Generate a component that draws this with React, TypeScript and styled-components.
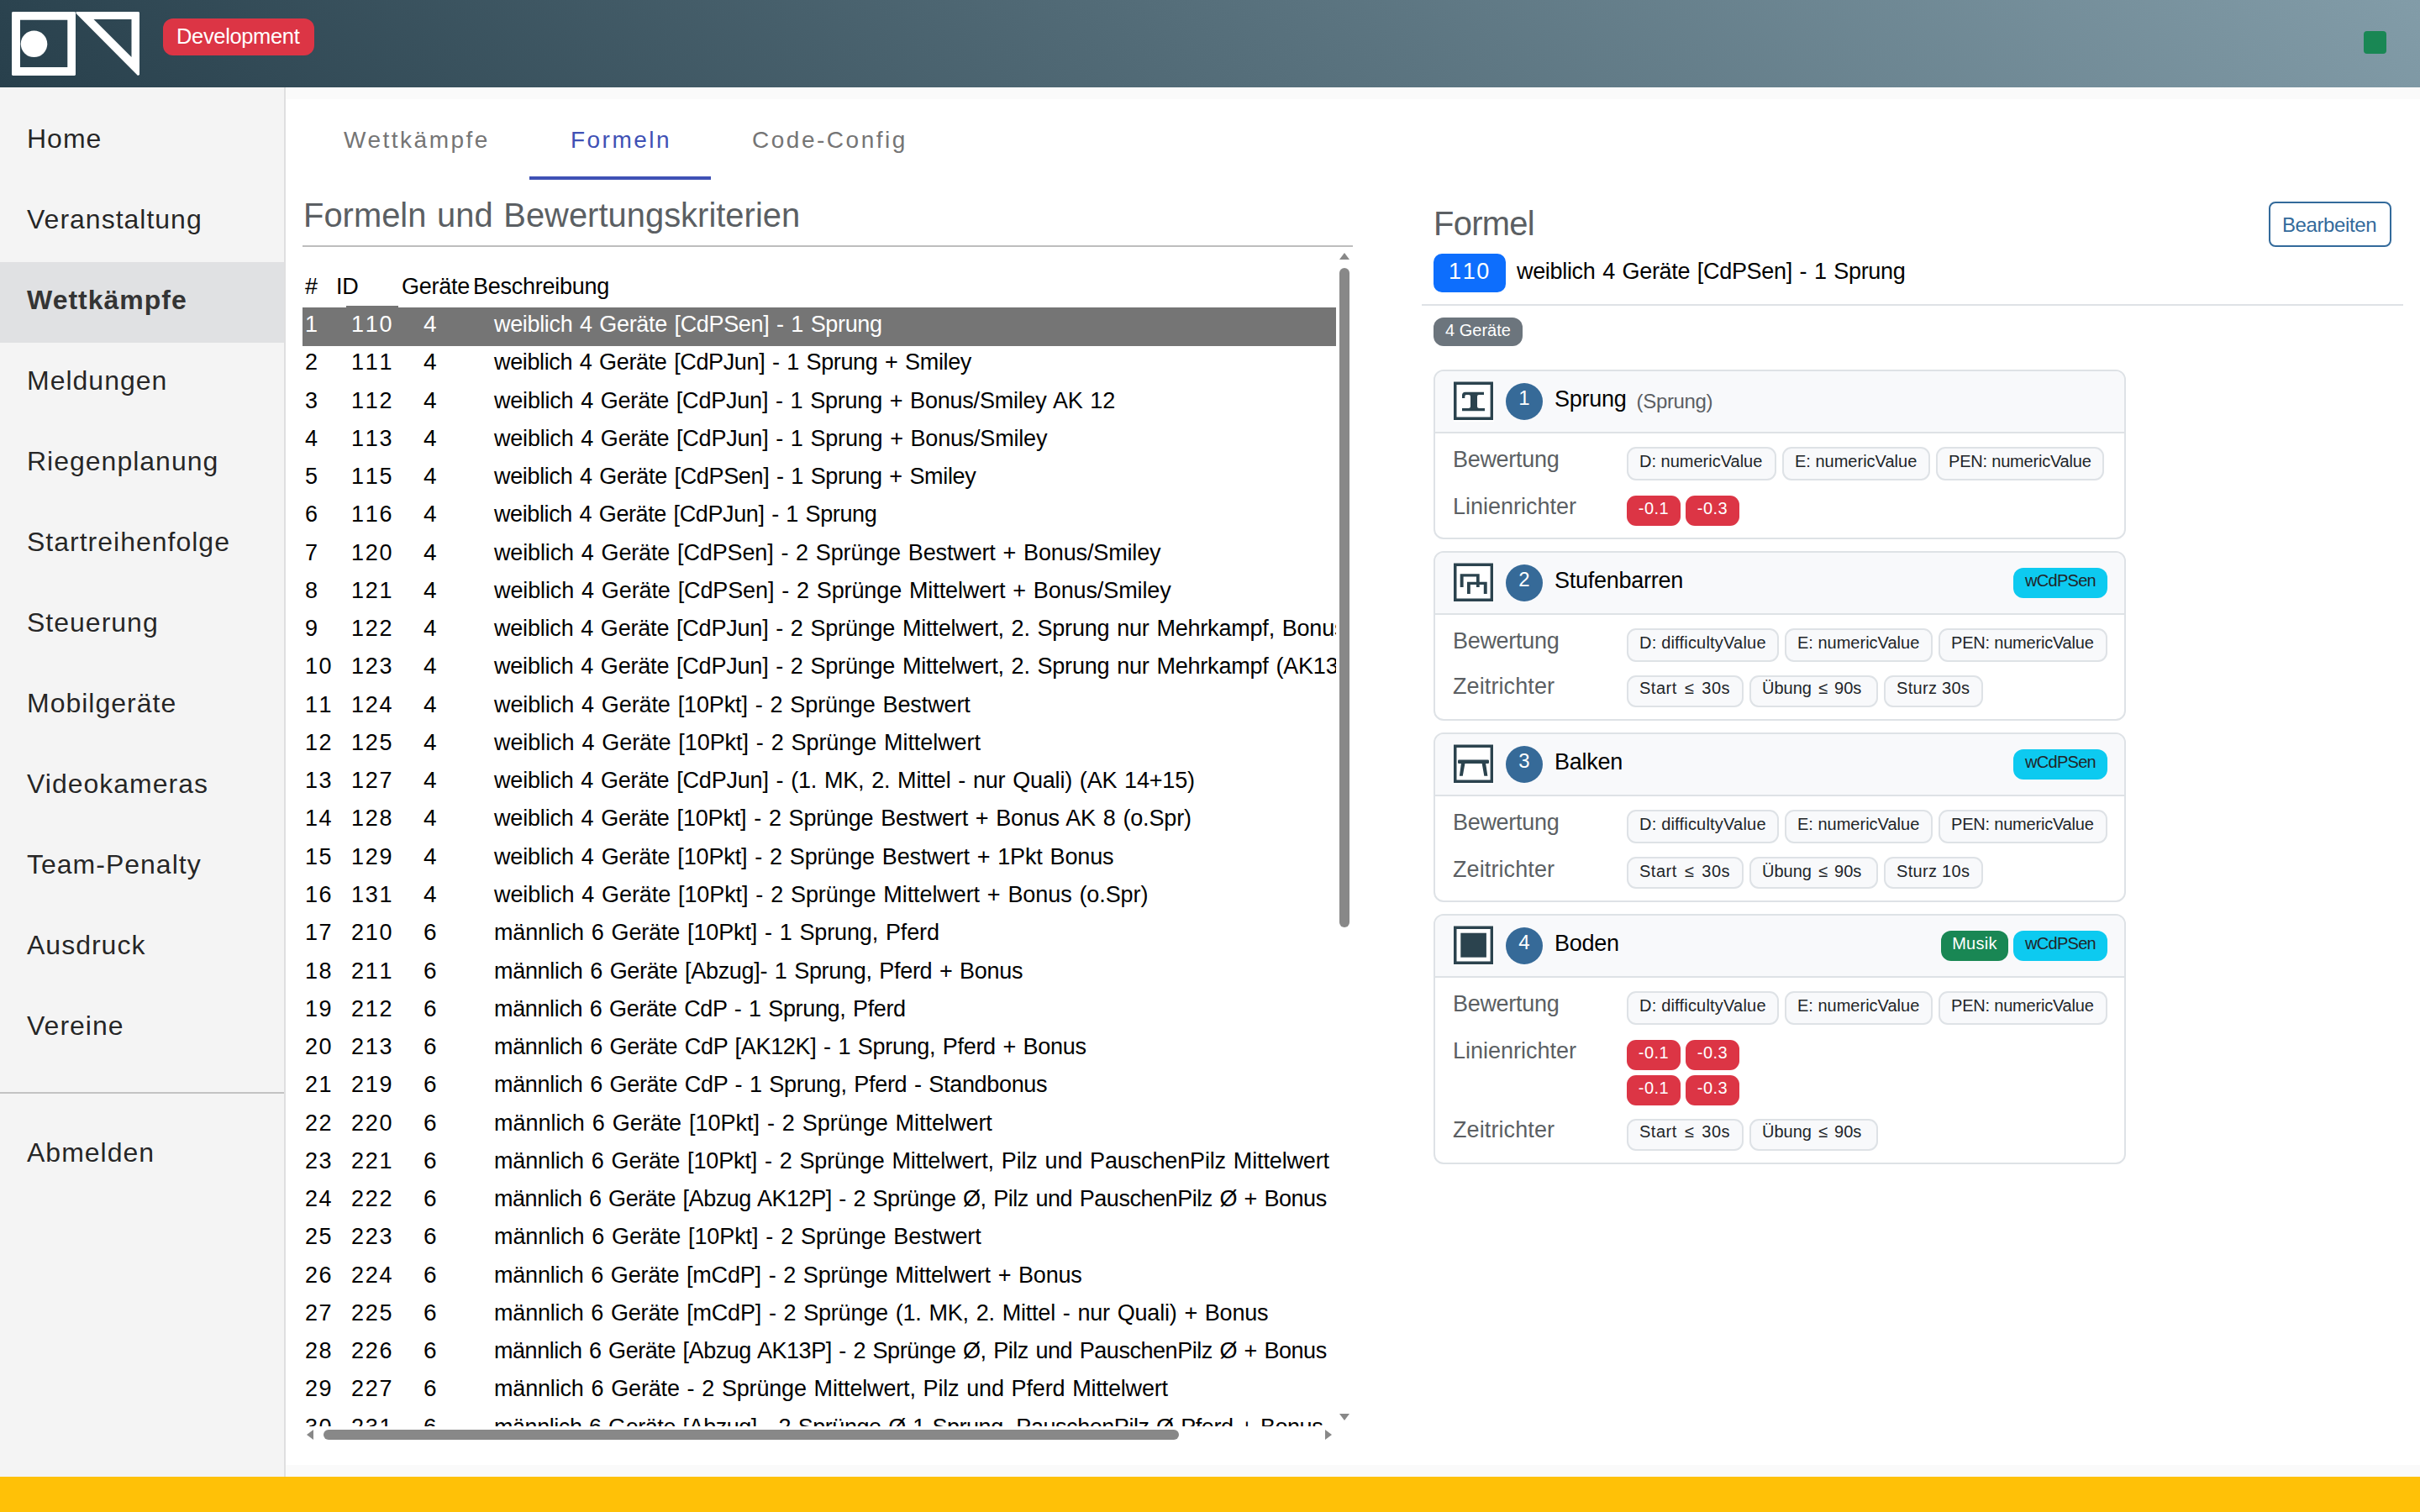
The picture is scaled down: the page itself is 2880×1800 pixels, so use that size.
import React from "react";
import styled, { createGlobalStyle, css } from "styled-components";

const sans = `"Liberation Sans", Arial, Helvetica, sans-serif`;
const muted = "#5b5f63";
const line = "#dee2e6";
const ink = "#2b434e";

const GlobalStyle = createGlobalStyle`
  *, *::before, *::after { box-sizing: border-box; }
  html, body { margin: 0; padding: 0; }
  body { background: #fff; font-family: ${sans}; color: #000; }
`;

/* ---------- page frame ---------- */

const Page = styled.div`
  display: flex;
  flex-direction: column;
  width: 2880px;
  height: 1800px;
  overflow: hidden;
`;

const TopBar = styled.header`
  flex: none;
  display: flex;
  align-items: flex-start;
  height: 104px;
  padding: 14px 40px 0 14px;
  background: linear-gradient(45deg, #28404c, #829ca8);
`;

const EnvBadge = styled.span`
  margin: 8px auto 0 28px;
  width: 180px;
  height: 44px;
  padding-left: 16px;
  border-radius: 12px;
  background: #dc3545;
  color: #fff;
  font-size: 25.5px;
  letter-spacing: -0.35px;
  line-height: 43px;
`;

const StatusLight = styled.span`
  width: 27px;
  height: 27px;
  margin-top: 23px;
  border-radius: 4px;
  background: #198754;
`;

const Body = styled.div`
  flex: 1;
  display: flex;
  min-height: 0;
`;

const StatusStrip = styled.footer`
  flex: none;
  height: 42px;
  background: #ffc107;
`;

/* ---------- sidebar ---------- */

const Sidebar = styled.nav`
  flex: none;
  width: 340px;
  padding-top: 16px;
  border-right: 2px solid #dfdfe0;
  background: #f4f4f4;
`;

const NavItem = styled.a<{ $active?: boolean }>`
  display: block;
  height: 96px;
  padding-left: 32px;
  color: rgba(0, 0, 0, 0.87);
  font-size: 32px;
  letter-spacing: 1px;
  line-height: 91px;
  ${(p) =>
    p.$active &&
    css`
      background: #e0e1e3;
      color: #343434;
      font-weight: 700;
    `}
`;

const NavDivider = styled.hr`
  height: 2px;
  margin: 28px 0 25px;
  border: 0;
  background: #c3c3c3;
`;

/* ---------- main area ---------- */

const Main = styled.main`
  flex: 1;
  display: flex;
  padding: 14px 0;
  background: #fafafa;
`;

const Sheet = styled.div`
  flex: 1;
  display: flex;
  flex-direction: column;
  padding: 0 20px 0 20px;
  background: #fff;
`;

const Tabs = styled.div`
  display: flex;
  height: 96px;
`;

const Tab = styled.a<{ $active?: boolean }>`
  height: 96px;
  padding: 0 47px 0 49px;
  border-bottom: 4px solid ${(p) => (p.$active ? "#3f51b5" : "transparent")};
  color: ${(p) => (p.$active ? "#3f51b5" : "#757575")};
  font-size: 28px;
  letter-spacing: 2.5px;
  line-height: 97px;
`;

const Columns = styled.div`
  flex: 1;
  display: flex;
  min-height: 0;
`;

/* ---------- formula list ---------- */

const ListPane = styled.section`
  display: flex;
  flex-direction: column;
  width: 1250px;
`;

const ListTitle = styled.h1`
  height: 80px;
  margin: 0;
  padding-left: 1px;
  border-bottom: 2px solid #bdbdbd;
  color: ${muted};
  font-size: 39.9px;
  font-weight: 400;
  letter-spacing: 0.02px;
  word-spacing: 1.5px;
  line-height: 84px;
`;

const ScrollFrame = styled.div`
  display: grid;
  grid-template-columns: 1230px 20px;
  grid-template-rows: 1404px 20px;
`;

const Viewport = styled.div`
  overflow: hidden;
`;

const HeadRow = styled.div`
  display: flex;
  height: 72px;
  padding: 26px 0 0 3px;
  font-size: 27px;
  letter-spacing: -0.25px;
  line-height: 43px;
`;

const HeadCell = styled.span<{ $w?: number }>`
  flex: none;
  width: ${(p) => (p.$w ? `${p.$w}px` : "auto")};
`;

const Row = styled.div<{ $selected?: boolean }>`
  display: flex;
  height: 45.27px;
  padding-left: 3px;
  font-size: 27px;
  line-height: 40px;
  white-space: nowrap;
  ${(p) =>
    p.$selected &&
    css`
      height: 46px;
      margin-bottom: -0.73px;
      background: #757575;
      color: #fff;
    `}
`;

const IndexCell = styled.span`
  flex: none;
  width: 49px;
  font-kerning: none;
  letter-spacing: 1.4px;
`;

const IdCell = styled.span<{ $selected?: boolean }>`
  flex: none;
  width: 62px;
  padding-left: 6px;
  font-kerning: none;
  letter-spacing: 1.7px;
  ${(p) =>
    p.$selected &&
    css`
      height: 48px;
      margin-top: -2px;
      padding-top: 2px;
      background: #757575;
    `}
`;

const CountCell = styled.span`
  flex: none;
  width: 114px;
  padding-left: 30px;
  font-size: 28px;
`;

const TextCell = styled.span<{ $track: number }>`
  letter-spacing: ${(p) => p.$track}px;
  word-spacing: 1.5px;
`;

const VTrack = styled.div`
  display: flex;
  flex-direction: column;
  align-items: flex-start;
  padding: 7px 0 7px 4px;
`;

const HTrack = styled.div`
  display: flex;
  align-items: flex-start;
  padding: 4px 5px 0 5px;
`;

const VThumb = styled.div`
  width: 12px;
  height: 785px;
  margin: 10px 0 auto;
  border-radius: 6px;
  background: #888;
`;

const HThumb = styled.div`
  width: 1018px;
  height: 12px;
  margin: 0 auto 0 12px;
  border-radius: 6px;
  background: #888;
`;

const Arrow = styled.i<{ $dir: "up" | "down" | "left" | "right" }>`
  width: 0;
  height: 0;
  border: 6px solid transparent;
  ${(p) => p.$dir === "up" && "border-top: 0; border-bottom: 8px solid #888;"}
  ${(p) => p.$dir === "down" && "border-bottom: 0; border-top: 8px solid #888;"}
  ${(p) => p.$dir === "left" && "border-left: 0; border-right: 8px solid #888;"}
  ${(p) => p.$dir === "right" && "border-right: 0; border-left: 8px solid #888;"}
`;

/* ---------- detail pane ---------- */

const DetailPane = styled.section`
  width: 1168px;
  margin-left: 82px;
`;

const DetailHead = styled.div`
  height: 150px;
  padding-left: 14px;
  border-bottom: 2px solid ${line};
`;

const TitleLine = styled.div`
  display: flex;
  justify-content: space-between;
  height: 88px;
  padding: 26px 14px 0 0;
`;

const DetailTitle = styled.h2`
  margin: 0;
  color: ${muted};
  font-size: 39.9px;
  font-weight: 400;
  letter-spacing: -0.7px;
  line-height: 52px;
`;

const EditButton = styled.button`
  width: 146px;
  height: 54px;
  padding: 0 0 0 14px;
  border: 2px solid #336a9b;
  border-radius: 8px;
  background: #fff;
  color: #336a9b;
  font: 24px / 51px ${sans};
  letter-spacing: -0.4px;
  text-align: left;
`;

const FormulaLine = styled.div`
  display: flex;
  height: 46px;
  font-size: 27px;
  line-height: 43px;
`;

const FormulaId = styled.span`
  width: 86px;
  height: 46px;
  margin-right: 13px;
  border-radius: 10px;
  background: #0d6efd;
  color: #fff;
  font-kerning: none;
  letter-spacing: 1.6px;
  text-align: center;
`;

const FormulaName = styled.span`
  letter-spacing: -0.32px;
  word-spacing: 1.5px;
`;

const CountBadge = styled.span`
  display: block;
  width: 106px;
  height: 34px;
  margin: 14px 0 28px 14px;
  border-radius: 12px;
  background: #6c757d;
  color: #fff;
  font-size: 20px;
  line-height: 30px;
  text-align: center;
`;

const CardStack = styled.div`
  display: flex;
  flex-direction: column;
  gap: 14px;
  width: 824px;
  margin-left: 14px;
`;

const Card = styled.article`
  border: 2px solid ${line};
  border-radius: 12px;
  background: #fff;
  overflow: hidden;
`;

const CardHead = styled.header`
  display: flex;
  align-items: flex-start;
  height: 74px;
  padding: 12px 20px 0 22px;
  border-bottom: 2px solid ${line};
  background: #f8f9fb;
`;

const Order = styled.span`
  width: 44px;
  height: 44px;
  margin: 2px 14px 0;
  border-radius: 50%;
  background: #366a98;
  color: #fff;
  font-size: 24px;
  line-height: 36px;
  text-align: center;
`;

const DeviceName = styled.span`
  font-size: 27px;
  letter-spacing: -0.25px;
  line-height: 43px;
`;

const DeviceHint = styled.span`
  margin-left: 12px;
  color: ${muted};
  font-size: 24px;
  letter-spacing: -0.35px;
  line-height: 47px;
`;

const TagList = styled.span`
  display: flex;
  gap: 6px;
  margin: 6px 0 0 auto;
`;

const Tag = styled.span<{ $kind: "music" | "info" }>`
  width: ${(p) => (p.$kind === "music" ? 80 : 112)}px;
  height: 36px;
  border-radius: 12px;
  background: ${(p) => (p.$kind === "music" ? "#198754" : "#0dcaf0")};
  color: ${(p) => (p.$kind === "music" ? "#fff" : "#212529")};
  font-size: 20px;
  letter-spacing: ${(p) => (p.$kind === "music" ? 0.3 : -0.7)}px;
  line-height: 30px;
  text-align: center;
`;

const CardBody = styled.div`
  padding: 0 20px 14px 21px;
`;

const CriteriaRow = styled.div<{ $gap: number }>`
  display: flex;
  align-items: flex-start;
  padding-top: ${(p) => p.$gap}px;
`;

const CriteriaLabel = styled.span<{ $lead: number; $track: number }>`
  flex: none;
  width: 207px;
  color: ${muted};
  font-size: 27px;
  letter-spacing: ${(p) => p.$track}px;
  line-height: ${(p) => p.$lead + 2}px;
`;

const PillLine = styled.div`
  display: flex;
  gap: 7px;
`;

const Pill = styled.span<{ $w: number; $h: number; $lead: number; $track: number; $word: number }>`
  flex: none;
  width: ${(p) => p.$w}px;
  height: ${(p) => p.$h}px;
  padding-left: 13px;
  border: 2px solid ${line};
  border-radius: 11px;
  background: #f8f9fb;
  color: #212529;
  font-size: 20px;
  letter-spacing: ${(p) => p.$track}px;
  word-spacing: ${(p) => p.$word}px;
  line-height: ${(p) => p.$lead + 1}px;
  white-space: nowrap;
`;

const Penalties = styled.div`
  display: grid;
  grid-template-columns: 64px 64px;
  gap: 6px;
`;

const Penalty = styled.span`
  height: 36px;
  border-radius: 11px;
  background: #dc3545;
  color: #fff;
  font-size: 20px;
  letter-spacing: 0.5px;
  line-height: 30px;
  text-align: center;
`;

/* ---------- drawings ---------- */

const Drawing = styled.svg`
  flex: none;
  display: block;
`;

const Logo = () => (
  <Drawing width="152" height="76" viewBox="0 0 152 76" fill="#fff">
    <path fillRule="evenodd" d="M1 0H75L76 1V75L75 76H1L0 75V1ZM10 9.8V66H66.3V9.8Z" />
    <circle cx="26.5" cy="38.3" r="15.8" />
    <path fillRule="evenodd" d="M76.5 0H151L152 1V75L150 76L76.5 2ZM97.5 9L142.5 54V9Z" />
  </Drawing>
);

const glyphs: Record<string, React.ReactNode> = {
  vault: (
    <path d="M10 20V16.5Q10 12.7 14 12.7H36V16H30Q28 16 28 18V29.5Q28 32 30.5 32H37V35.2H10V32H17.5Q20 32 20 29.5V18Q20 16 18 16H15Q13.3 16 13.3 18V20Z" />
  ),
  bars: (
    <>
      <path d="M7.7 13.3H30.7V29H27V16.4H11.6V29H7.7Z" />
      <path d="M16 22.8H39.7V37H35.8V26H19.8V37H16Z" />
    </>
  ),
  beam: (
    <>
      <rect x="5" y="18.6" width="37" height="4.4" rx="1.2" />
      <path d="M9 22H13.6L10.8 37.7H6.9ZM33.5 22H38L40.4 37.7H36.3Z" />
    </>
  ),
  floor: <rect x="8.3" y="8.7" width="30.6" height="29" />,
};

const DeviceIcon = ({ name }: { name: string }) => (
  <Drawing width="48" height="48" viewBox="0 0 48 48">
    <rect width="48" height="48" fill="#fff" />
    <path
      fill={ink}
      fillRule="evenodd"
      d="M0 .5H47V46H0ZM3.5 4V42.6H43.6V4Z"
    />
    <g fill={ink}>{glyphs[name]}</g>
  </Drawing>
);

/* ---------- data ---------- */

const navItems = [
  "Home", "Veranstaltung", "Wettkämpfe", "Meldungen", "Riegenplanung", "Startreihenfolge",
  "Steuerung", "Mobilgeräte", "Videokameras", "Team-Penalty", "Ausdruck", "Vereine",
];

/* id, device count, description, letter spacing */
const formulas: [number, number, string, number][] = [
  [110, 4, "weiblich 4 Geräte [CdPSen] - 1 Sprung", -0.34],
  [111, 4, "weiblich 4 Geräte [CdPJun] - 1 Sprung + Smiley", -0.36],
  [112, 4, "weiblich 4 Geräte [CdPJun] - 1 Sprung + Bonus/Smiley AK 12", -0.21],
  [113, 4, "weiblich 4 Geräte [CdPJun] - 1 Sprung + Bonus/Smiley", -0.2],
  [115, 4, "weiblich 4 Geräte [CdPSen] - 1 Sprung + Smiley", -0.34],
  [116, 4, "weiblich 4 Geräte [CdPJun] - 1 Sprung", -0.39],
  [120, 4, "weiblich 4 Geräte [CdPSen] - 2 Sprünge Bestwert + Bonus/Smiley", -0.14],
  [121, 4, "weiblich 4 Geräte [CdPSen] - 2 Sprünge Mittelwert + Bonus/Smiley", -0.11],
  [122, 4, "weiblich 4 Geräte [CdPJun] - 2 Sprünge Mittelwert, 2. Sprung nur Mehrkampf, Bonus/Smiley", -0.2],
  [123, 4, "weiblich 4 Geräte [CdPJun] - 2 Sprünge Mittelwert, 2. Sprung nur Mehrkampf (AK13)", -0.2],
  [124, 4, "weiblich 4 Geräte [10Pkt] - 2 Sprünge Bestwert", -0.11],
  [125, 4, "weiblich 4 Geräte [10Pkt] - 2 Sprünge Mittelwert", -0.07],
  [127, 4, "weiblich 4 Geräte [CdPJun] - (1. MK, 2. Mittel - nur Quali) (AK 14+15)", -0.19],
  [128, 4, "weiblich 4 Geräte [10Pkt] - 2 Sprünge Bestwert + Bonus AK 8 (o.Spr)", -0.17],
  [129, 4, "weiblich 4 Geräte [10Pkt] - 2 Sprünge Bestwert + 1Pkt Bonus", -0.13],
  [131, 4, "weiblich 4 Geräte [10Pkt] - 2 Sprünge Mittelwert + Bonus (o.Spr)", -0.09],
  [210, 6, "männlich 6 Geräte [10Pkt] - 1 Sprung, Pferd", -0.14],
  [211, 6, "männlich 6 Geräte [Abzug]- 1 Sprung, Pferd + Bonus", -0.31],
  [212, 6, "männlich 6 Geräte CdP - 1 Sprung, Pferd", -0.36],
  [213, 6, "männlich 6 Geräte CdP [AK12K] - 1 Sprung, Pferd + Bonus", -0.32],
  [219, 6, "männlich 6 Geräte CdP - 1 Sprung, Pferd - Standbonus", -0.32],
  [220, 6, "männlich 6 Geräte [10Pkt] - 2 Sprünge Mittelwert", -0.03],
  [221, 6, "männlich 6 Geräte [10Pkt] - 2 Sprünge Mittelwert, Pilz und PauschenPilz Mittelwert", -0.14],
  [222, 6, "männlich 6 Geräte [Abzug AK12P] - 2 Sprünge Ø, Pilz und PauschenPilz Ø + Bonus", -0.45],
  [223, 6, "männlich 6 Geräte [10Pkt] - 2 Sprünge Bestwert", -0.09],
  [224, 6, "männlich 6 Geräte [mCdP] - 2 Sprünge Mittelwert + Bonus", -0.2],
  [225, 6, "männlich 6 Geräte [mCdP] - 2 Sprünge (1. MK, 2. Mittel - nur Quali) + Bonus", -0.19],
  [226, 6, "männlich 6 Geräte [Abzug AK13P] - 2 Sprünge Ø, Pilz und PauschenPilz Ø + Bonus", -0.45],
  [227, 6, "männlich 6 Geräte - 2 Sprünge Mittelwert, Pilz und Pferd Mittelwert", -0.17],
  [231, 6, "männlich 6 Geräte [Abzug] - 2 Sprünge Ø 1 Sprung, PauschenPilz Ø Pferd + Bonus", -0.45],
];

/* text, width, letter spacing, word spacing */
type PillDef = [string, number, number, number];

const numeric: PillDef[] = [
  ["D: numericValue", 178, 0, 0],
  ["E: numericValue", 176, 0, 0],
  ["PEN: numericValue", 200, -0.2, 0],
];
const difficulty: PillDef[] = [
  ["D: difficultyValue", 181, 0.2, 0],
  ["E: numericValue", 176, 0, 0],
  ["PEN: numericValue", 201, -0.2, 0],
];
const time = (fall?: string): PillDef[] => [
  ["Start ≤ 30s", 139, 0.5, 3],
  ["Übung ≤ 90s", 153, 0, 2.5],
  ...(fall ? [[fall, 118, 0.3, 0] as PillDef] : []),
];

interface Device {
  icon: string;
  name: string;
  hint?: string;
  tags: ("music" | "info")[];
  values: PillDef[];
  penalties?: string[];
  times?: PillDef[];
  timeLead?: number;
}

const devices: Device[] = [
  { icon: "vault", name: "Sprung", hint: "(Sprung)", tags: [], values: numeric, penalties: ["-0.1", "-0.3"] },
  { icon: "bars", name: "Stufenbarren", tags: ["info"], values: difficulty, times: time("Sturz 30s") },
  { icon: "beam", name: "Balken", tags: ["info"], values: difficulty, times: time("Sturz 10s"), timeLead: 29 },
  {
    icon: "floor", name: "Boden", tags: ["music", "info"], values: difficulty,
    penalties: ["-0.1", "-0.3", "-0.1", "-0.3"], times: time(),
  },
];

/* ---------- composed parts ---------- */

const Pills = ({ items, h, lead }: { items: PillDef[]; h: number; lead: number }) => (
  <PillLine>
    {items.map(([text, w, track, word]) => (
      <Pill key={text} $w={w} $h={h} $lead={lead} $track={track} $word={word}>{text}</Pill>
    ))}
  </PillLine>
);

const DeviceCard = ({ device, order }: { device: Device; order: number }) => (
  <Card>
    <CardHead>
      <DeviceIcon name={device.icon} />
      <Order>{order}</Order>
      <DeviceName>{device.name}</DeviceName>
      {device.hint && <DeviceHint>{device.hint}</DeviceHint>}
      <TagList>
        {device.tags.map((t) => (
          <Tag key={t} $kind={t}>{t === "music" ? "Musik" : "wCdPSen"}</Tag>
        ))}
      </TagList>
    </CardHead>
    <CardBody>
      <CriteriaRow $gap={16}>
        <CriteriaLabel $lead={29} $track={-0.3}>Bewertung</CriteriaLabel>
        <Pills items={device.values} h={40} lead={29} />
      </CriteriaRow>
      {device.penalties && (
        <CriteriaRow $gap={18}>
          <CriteriaLabel $lead={25} $track={0}>Linienrichter</CriteriaLabel>
          <Penalties>
            {device.penalties.map((p, i) => <Penalty key={i}>{p}</Penalty>)}
          </Penalties>
        </CriteriaRow>
      )}
      {device.times && (
        <CriteriaRow $gap={16}>
          <CriteriaLabel $lead={device.timeLead ?? 25} $track={0.1}>Zeitrichter</CriteriaLabel>
          <Pills items={device.times} h={38} lead={device.timeLead ?? 25} />
        </CriteriaRow>
      )}
    </CardBody>
  </Card>
);

export default function App() {
  return (
    <Page>
      <GlobalStyle />
      <TopBar>
        <Logo />
        <EnvBadge>Development</EnvBadge>
        <StatusLight />
      </TopBar>
      <Body>
        <Sidebar>
          {navItems.map((item) => (
            <NavItem key={item} $active={item === "Wettkämpfe"}>{item}</NavItem>
          ))}
          <NavDivider />
          <NavItem>Abmelden</NavItem>
        </Sidebar>
        <Main>
          <Sheet>
            <Tabs>
              <Tab>Wettkämpfe</Tab>
              <Tab $active>Formeln</Tab>
              <Tab>Code-Config</Tab>
            </Tabs>
            <Columns>
              <ListPane>
                <ListTitle>Formeln und Bewertungskriterien</ListTitle>
                <ScrollFrame>
                  <Viewport>
                    <HeadRow>
                      <HeadCell $w={37}>#</HeadCell>
                      <HeadCell $w={78}>ID</HeadCell>
                      <HeadCell $w={85}>Geräte</HeadCell>
                      <HeadCell>Beschreibung</HeadCell>
                    </HeadRow>
                    {formulas.map(([id, count, text, track], i) => (
                      <Row key={id} $selected={i === 0}>
                        <IndexCell>{i + 1}</IndexCell>
                        <IdCell $selected={i === 0}>{id}</IdCell>
                        <CountCell>{count}</CountCell>
                        <TextCell $track={track}>{text}</TextCell>
                      </Row>
                    ))}
                  </Viewport>
                  <VTrack>
                    <Arrow $dir="up" />
                    <VThumb />
                    <Arrow $dir="down" />
                  </VTrack>
                  <HTrack>
                    <Arrow $dir="left" />
                    <HThumb />
                    <Arrow $dir="right" />
                  </HTrack>
                </ScrollFrame>
              </ListPane>
              <DetailPane>
                <DetailHead>
                  <TitleLine>
                    <DetailTitle>Formel</DetailTitle>
                    <EditButton>Bearbeiten</EditButton>
                  </TitleLine>
                  <FormulaLine>
                    <FormulaId>110</FormulaId>
                    <FormulaName>weiblich 4 Geräte [CdPSen] - 1 Sprung</FormulaName>
                  </FormulaLine>
                </DetailHead>
                <CountBadge>4 Geräte</CountBadge>
                <CardStack>
                  {devices.map((d, i) => (
                    <DeviceCard key={d.name} device={d} order={i + 1} />
                  ))}
                </CardStack>
              </DetailPane>
            </Columns>
          </Sheet>
        </Main>
      </Body>
      <StatusStrip />
    </Page>
  );
}
